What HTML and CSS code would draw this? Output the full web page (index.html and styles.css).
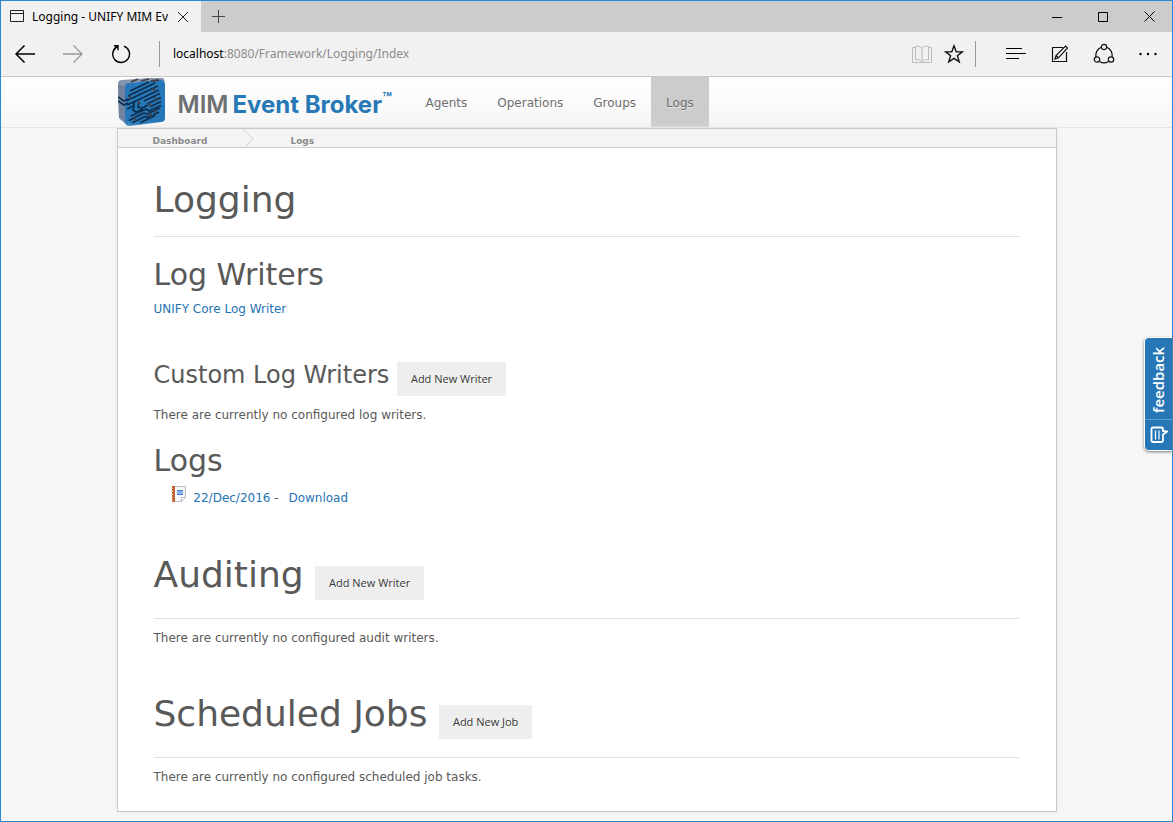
FILE: index.html
```html
<!DOCTYPE html>
<html lang="en">
<head>
    <meta charset="UTF-8">
    <meta name="viewport" content="width=device-width, initial-scale=1.0">
    <title>Logging - UNIFY MIM Event Broker</title>
    <link rel="stylesheet" href="styles.css">
</head>
<body>
    <div class="window">
        <div class="tab-bar">
            <div class="tab">
                <svg class="tab-icon" width="15" height="13" viewBox="0 0 15 13" fill="none" stroke="#222">
                    <path d="M.5 .5h13v11H.5zM.5 3.500h13"/>
                </svg>
                <span class="tab-title">Logging - UNIFY MIM Ev</span>
                <button class="icon-button tab-close" aria-label="Close tab">
                    <svg width="12" height="12" viewBox="0 0 12 12" stroke="#222" fill="none"><path d="M1 1l10 10M11 1L1 11"/></svg>
                </button>
            </div>
            <button class="icon-button new-tab" aria-label="New tab">
                <svg width="13" height="13" viewBox="0 0 13 13" stroke="#444" fill="none"><path d="M6.5 0v13M0 6.5h13"/></svg>
            </button>
            <div class="window-controls">
                <button class="icon-button" aria-label="Minimize">
                    <svg width="10" height="10" viewBox="0 0 10 10" stroke="#000" fill="none"><path d="M0 5.5h10"/></svg>
                </button>
                <button class="icon-button" aria-label="Maximize">
                    <svg width="10" height="10" viewBox="0 0 10 10" stroke="#000" fill="none"><path d="M.5 .5h9v9h-9z"/></svg>
                </button>
                <button class="icon-button" aria-label="Close">
                    <svg width="11" height="11" viewBox="0 0 11 11" stroke="#000" fill="none"><path d="M.5 .5l10 10M10.5 .5l-10 10"/></svg>
                </button>
            </div>
        </div>

        <div class="toolbar">
            <div class="history">
                <button class="icon-button" aria-label="Back">
                    <svg width="20" height="18" viewBox="0 0 20 18" stroke="#000" stroke-width="1.5" fill="none"><path d="M20 9H1M9.5 .5L1 9l8.500 8.500"/></svg>
                </button>
                <button class="icon-button" aria-label="Forward">
                    <svg width="20" height="18" viewBox="0 0 20 18" stroke="#999" stroke-width="1.300" fill="none"><path d="M0 9h19M10.500 .5L19 9l-8.500 8.500"/></svg>
                </button>
                <button class="icon-button" aria-label="Refresh">
                    <svg width="20" height="20" viewBox="0 0 20 20" stroke="#000" stroke-width="1.400" fill="none"><path d="M13 2.200A8.400 8.400 0 1 1 6.500 2.500M3 1.700h4v4.500"/></svg>
                </button>
            </div>
            <form class="address">
                <label for="address-path">localhost</label>
                <input type="text" id="address-path" value=":8080/Framework/Logging/Index">
                <button type="button" class="icon-button" aria-label="Reading view">
                    <svg width="20" height="19" viewBox="0 0 20 19" stroke="#bbb" fill="none"><path d="M3.500 2.500h-3v15h19v-15h-3M10 3C8 1 5 1 3.500 1.500v13.500c2-.5 5-.5 6.500 1.500 1.500-2 4.500-2 6.500-1.500V1.500C15 1 12 1 10 3zM10 3v14"/></svg>
                </button>
                <button type="button" class="icon-button" aria-label="Add to favorites">
                    <svg width="20" height="20" viewBox="0 0 20 20" stroke="#111" stroke-width="1.400" fill="none"><path d="M10 1.800l2.200 5.900 6.100.2-4.900 3.800 1.800 6.200L10 14.300l-5.200 3.600 1.800-6.200L1.700 7.900l6.100-.2z"/></svg>
                </button>
            </form>
            <div class="tools">
                <button class="icon-button" aria-label="Hub">
                    <svg width="20" height="14" viewBox="0 0 20 14" stroke="#000" fill="none"><path d="M0 1.500h16M0 6.500h20M0 11.500h13"/></svg>
                </button>
                <button class="icon-button" aria-label="Make a web note">
                    <svg width="18" height="18" viewBox="0 0 18 18" stroke="#111" stroke-width="1.200" fill="none"><path d="M12 2.500H1.500v14h14V7M4 14l1-3.500L14.500 1l2 2L7.500 12.800zM5 10.500l2.500 2.300"/></svg>
                </button>
                <button class="icon-button" aria-label="Share">
                    <svg width="22" height="22" viewBox="0 0 22 22" stroke="#111" stroke-width="1.200" fill="none"><circle cx="11" cy="4" r="2.700"/><circle cx="4" cy="16.500" r="2.700"/><circle cx="18" cy="16.500" r="2.700"/><path d="M8.300 4.300A8.500 8.500 0 0 0 3 13.800M13.700 4.300A8.500 8.500 0 0 1 19 13.800M6.500 18.500a8.500 8.500 0 0 0 9 0"/></svg>
                </button>
                <button class="icon-button" aria-label="More">
                    <svg width="18" height="4" viewBox="0 0 18 4" fill="#000"><circle cx="1.500" cy="2" r="1.200"/><circle cx="9" cy="2" r="1.200"/><circle cx="16.500" cy="2" r="1.200"/></svg>
                </button>
            </div>
        </div>

        <header class="site-header">
            <div class="site-header-inner">
                <a class="brand" href="#">
                    <svg width="48" height="48" viewBox="0 0 48 48">
                        <path d="M0 6Q0 2 4 2L32 0h13l2 3-36 2-2 42-8-7z" fill="#8594ae"/>
                        <path d="M0 7l8 1v38l-7-6z" fill="#71839f"/>
                        <path d="M7 9q0-4 4-4l31-3q5 0 5 4v34q0 4-4 4l-31 4q-5 0-5-4z" fill="#2778b8"/>
                        <path d="M13 4l7-3M23 3l8-2M33 3l8-1" stroke="#453f42" stroke-width="1.800"/>
                        <g fill="none" stroke="#0c2f50" stroke-width="1.800">
                            <path d="M12 13L31 4"/>
                            <path d="M10 18L37 5"/>
                            <path d="M9 22.500L40 8"/>
                            <path d="M9 27l11-5L41 12"/>
                            <path d="M26 23l16-7.500"/>
                            <path d="M29 26l14-6.500"/>
                            <path d="M9 31l6-3"/>
                            <path d="M16 24v4l-1 4 3 2 7-3"/>
                            <path d="M21 24l-1 5 4 1 6-3"/>
                            <path d="M32 29l11-5.500"/>
                            <path d="M13 38l15-7 3 2 12-5.500"/>
                            <path d="M11 42.500l15-7.500 3 1 13-6"/>
                            <path d="M14 45l13-6.500 2 1 5-3"/>
                            <path d="M35 37l6-3"/>
                            <path d="M22 45l15-7.500"/>
                        </g>
                        <path d="M0 19l6 4 4-2M0 23l6 4 4-2" fill="none" stroke="#0c2f50" stroke-width="1.600"/>
                        <path d="M11 18l2 3M35 10l2 3M37 19l1 4M20 23l2 3M31 25l2 4M16 39l2 4M31 35l2 4M36 32l2 3" stroke="#464447" stroke-width="1.800"/>
                    </svg>
                    <span class="brand-name">MIM<b>Event Broker</b><sup>™</sup></span>
                </a>
                <nav class="main-nav">
                    <a href="#">Agents</a>
                    <a href="#">Operations</a>
                    <a href="#">Groups</a>
                    <a href="#" class="active">Logs</a>
                </nav>
            </div>
        </header>

        <main class="page">
            <div class="breadcrumb">
                <a href="#">Dashboard</a>
                <svg width="12" height="18" viewBox="0 0 12 18" fill="none" stroke="#d0d0d0"><path d="M1 0l10 10-8 8"/></svg>
                <a href="#">Logs</a>
            </div>

            <div class="content">
                <section>
                    <h1>Logging</h1>
                    <h2>Log Writers</h2>
                    <p class="writer"><a href="#">UNIFY Core Log Writer</a></p>
                    <h3>Custom Log Writers <button class="button">Add New Writer</button></h3>
                    <p>There are currently no configured log writers.</p>
                    <h2>Logs</h2>
                    <ul class="logs">
                        <li>
                            <svg width="16" height="16" viewBox="0 0 16 16">
                                <path d="M3 .5h11.500v11l-4 4H3z" fill="#f4f6fa" stroke="#b9bdc7"/>
                                <path d="M14.500 11.500h-4v4z" fill="#fff" stroke="#b9bdc7"/>
                                <path d="M1 0h3v16H1z" fill="#c0612f"/>
                                <path d="M0 2.500h2M0 5.500h2M0 8.500h2M0 11.500h2M0 14.500h2" stroke="#e8d3c5"/>
                                <path d="M6 4h6v5H6z" fill="#8db2ee"/>
                                <path d="M6 4.500h6M6 8.500h6" stroke="#4a7fd8"/>
                            </svg>
                            <a href="#">22/Dec/2016</a> - <a href="#" class="download">Download</a>
                        </li>
                    </ul>
                </section>

                <section>
                    <h1>Auditing <button class="button">Add New Writer</button></h1>
                    <p>There are currently no configured audit writers.</p>
                </section>

                <section>
                    <h1>Scheduled Jobs <button class="button">Add New Job</button></h1>
                    <p>There are currently no configured scheduled job tasks.</p>
                </section>
            </div>
        </main>

        <button class="feedback">
            <span>feedback</span>
            <svg width="18" height="18" viewBox="0 0 18 18" fill="none" stroke="#fff">
                <path d="M3 1.500h8.500q1.500 0 1.500 1.500v2l4 .5-4 3v6q0 1.500-1.500 1.500H3q-1.500 0-1.500-1.500V3q0-1.500 1.500-1.500z" stroke-width="1.800"/>
                <path d="M5.500 4.500v9M9 4.500v9" stroke-width="1.200"/>
            </svg>
        </button>
    </div>
</body>
</html>
```
FILE: styles.css
```css
* {
    box-sizing: border-box;
}
body {
    margin: 0;
    font-family: "DejaVu Sans", Verdana, sans-serif;
    font-size: 12px;
    line-height: 22px;
    color: #595959;
}
a {
    color: #1f73b3;
    text-decoration: none;
}
button {
    font-family: inherit;
    border: 0;
    cursor: pointer;
}
.window {
    display: flex;
    flex-direction: column;
    position: relative;
    min-height: 100vh;
    border: 1px solid #2b88d0;
    background: #f7f7f7;
}
.icon-button {
    display: flex;
    align-items: center;
    justify-content: center;
    padding: 0;
    background: none;
}

/* Browser tabs */
.tab-bar {
    display: flex;
    height: 31px;
    background: #cccccc;
}
.tab {
    display: flex;
    align-items: center;
    width: 200px;
    padding: 0 12px 0 9px;
    background: #f1f1f1;
    color: #000;
    font-family: "Noto Sans", "Segoe UI", sans-serif;
}
.tab-icon {
    flex: none;
}
.tab-title {
    flex: 1;
    margin: 0 9px 0 7px;
    overflow: hidden;
    white-space: nowrap;
}
.new-tab {
    width: 34px;
}
.window-controls {
    display: flex;
    margin-left: auto;
}
.window-controls .icon-button {
    width: 46px;
}

/* Address bar */
.toolbar {
    display: flex;
    align-items: center;
    height: 45px;
    background: #f1f1f1;
    border-bottom: 1px solid #c8c8c8;
}
.history {
    display: flex;
}
.history .icon-button {
    width: 48px;
    height: 40px;
}
.address {
    display: flex;
    align-items: center;
    flex: 1;
    height: 26px;
    margin-left: 14px;
    padding: 0 11px 0 13px;
    border-left: 1px solid #999;
    border-right: 1px solid #999;
    font-family: "Noto Sans", "Segoe UI", sans-serif;
}
.address label {
    color: #000;
}
.address input {
    flex: 1;
    padding: 0;
    border: 0;
    background: none;
    color: #8c8c8c;
    font: inherit;
}
.address .icon-button + .icon-button {
    margin-left: 12px;
}
.tools {
    display: flex;
    padding-left: 18px;
    padding-right: 2px;
}
.tools .icon-button {
    width: 44px;
    height: 40px;
}

/* Site header */
.site-header {
    background: linear-gradient(#ffffff, #f6f6f6);
    border-bottom: 1px solid #e4e4e4;
}
.site-header-inner {
    display: flex;
    width: 100%;
    max-width: 940px;
    height: 50px;
    margin: 0 auto;
}
.brand {
    display: flex;
    align-items: center;
    width: 294px;
    padding-left: 1px;
    color: #6f7072;
}
.brand-name {
    margin-left: 12px;
    padding-top: 4px;
    font-family: Inter, sans-serif;
    font-size: 24px;
    font-weight: 600;
    white-space: nowrap;
}
.brand-name b {
    margin-left: 4px;
    color: #2678b6;
    font-weight: 700;
}
.brand-name sup {
    color: #2678b6;
    font-size: 16px;
    line-height: 12px;
}
.main-nav {
    display: flex;
}
.main-nav a {
    padding: 0 15px;
    line-height: 52px;
    color: #6e6e6e;
    text-shadow: 0 1px 0 #fff;
}
.main-nav .active {
    background: #cccccc;
    text-shadow: 0 1px 0 #e6e6e6;
}

/* Page */
.page {
    width: 100%;
    max-width: 940px;
    margin: 0 auto 9px;
    border: 1px solid #c8c8c8;
    background: #fff;
    box-shadow: 0 0 6px #e8e8e8;
}
.breadcrumb {
    display: flex;
    align-items: center;
    height: 19px;
    padding-left: 35px;
    background: #f4f4f4;
    border-bottom: 1px solid #d0d0d0;
    font-size: 9px;
    font-weight: bold;
}
.breadcrumb a {
    padding-top: 5px;
    color: #8a8a8a;
    text-shadow: 0 1px 0 #fff;
}
.breadcrumb svg {
    margin: 0 36px 0 35px;
}
.content {
    padding: 34px 36px 23px;
}
h1, h2, h3, p, ul {
    margin: 0;
    font-weight: normal;
}
h1 {
    margin-bottom: 8px;
    padding-bottom: 18px;
    border-bottom: 1px solid #e2e2e2;
    font-size: 36px;
    line-height: 36px;
}
h2 {
    margin-top: 20px;
    font-size: 30px;
    line-height: 36px;
}
p + h2 {
    margin-top: 17px;
}
h3 {
    margin-bottom: 8px;
    font-size: 24px;
    line-height: 24px;
}
section + section {
    margin-top: 47px;
}
.writer {
    margin-top: 5px;
    margin-bottom: 42px;
}
.button {
    padding: 8px 14px;
    background: #eeeeee;
    color: #333;
    font-family: "Open Sans", "Segoe UI", sans-serif;
    font-size: 11px;
    line-height: 18px;
    text-shadow: 0 1px 0 #fff;
}
.logs {
    margin-top: 7px;
    padding-left: 17px;
    padding-bottom: 1px;
    list-style: none;
}
.logs svg {
    margin-right: 3px;
}
.logs .download {
    margin-left: 6px;
}

/* Feedback tab on the right edge */
.feedback {
    position: absolute;
    top: 336px;
    right: 0;
    display: flex;
    flex-direction: column;
    align-items: center;
    width: 28px;
    height: 114px;
    padding: 0;
    border: 1px solid #fff;
    border-right: 0;
    border-radius: 5px 0 0 5px;
    background: #2777b6;
    box-shadow: 0 1px 3px #777;
    color: #fff;
}
.feedback span {
    flex: 1;
    width: 100%;
    padding-top: 6px;
    border-top: 1px solid #5d9dce;
    font-family: "Open Sans", sans-serif;
    font-size: 15px;
    font-weight: 600;
    line-height: 26px;
    text-align: left;
    writing-mode: vertical-rl;
    transform: rotate(180deg);
}
.feedback svg {
    margin: 6px 0;
}
```
